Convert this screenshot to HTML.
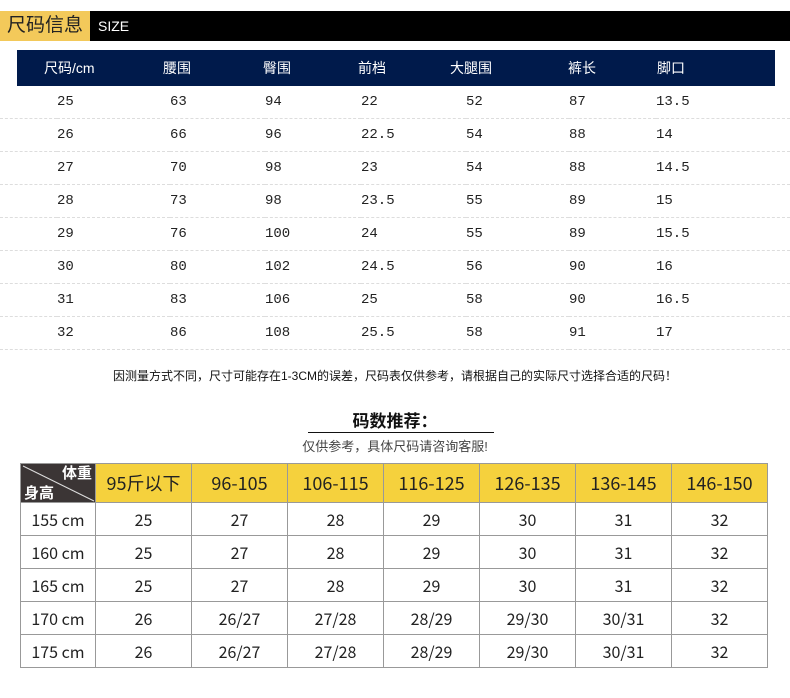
<!DOCTYPE html>
<html><head><meta charset="utf-8"><style>
body{margin:0;width:790px;height:698px;background:#fff;position:relative;font-family:"Liberation Sans","Noto Sans CJK SC",sans-serif;overflow:hidden}
.a{position:absolute}
.t1 td{height:32px;font-size:14px;font-family:"Liberation Mono","Noto Sans CJK SC",monospace;color:#222;border-bottom:1px dashed #ddd;padding:0}
table{border-collapse:collapse}
.t2 td{border:1px solid #999;text-align:center;font-size:16px;color:#222;padding:0;height:32px;font-family:"Noto Sans CJK SC",sans-serif}
.t2 tr.h td{background:#f5d13d;font-size:18px;height:38px}
</style></head><body>
<div class="a" style="left:0;top:11px;width:90px;height:30px;background:#f3c95a;font-size:19px;line-height:30px;text-align:center;color:#222">尺码信息</div>
<div class="a" style="left:90px;top:11px;width:700px;height:30px;background:#000;color:#fff;font-size:14px;line-height:30px;padding-left:8px;box-sizing:border-box">SIZE</div>
<div class="a" style="left:17px;top:50px;width:758px;height:36px;background:#001a4b"></div>
<div class="a" style="top:50px;left:0;width:790px;height:36px;color:#fff;font-size:14px;line-height:36px">
<span class="a" style="left:44px">尺码/cm</span><span class="a" style="left:163px">腰围</span><span class="a" style="left:263px">臀围</span><span class="a" style="left:358px">前档</span><span class="a" style="left:450px">大腿围</span><span class="a" style="left:568px">裤长</span><span class="a" style="left:657px">脚口</span></div>
<table class="t1 a" style="left:0;top:86px;width:790px">
<colgroup><col style="width:57px"><col style="width:113px"><col style="width:95px"><col style="width:96px"><col style="width:105px"><col style="width:103px"><col style="width:87px"><col></colgroup>
<tr><td></td><td>25</td><td>63</td><td>94</td><td>22</td><td>52</td><td>87</td><td>13.5</td></tr>
<tr><td></td><td>26</td><td>66</td><td>96</td><td>22.5</td><td>54</td><td>88</td><td>14</td></tr>
<tr><td></td><td>27</td><td>70</td><td>98</td><td>23</td><td>54</td><td>88</td><td>14.5</td></tr>
<tr><td></td><td>28</td><td>73</td><td>98</td><td>23.5</td><td>55</td><td>89</td><td>15</td></tr>
<tr><td></td><td>29</td><td>76</td><td>100</td><td>24</td><td>55</td><td>89</td><td>15.5</td></tr>
<tr><td></td><td>30</td><td>80</td><td>102</td><td>24.5</td><td>56</td><td>90</td><td>16</td></tr>
<tr><td></td><td>31</td><td>83</td><td>106</td><td>25</td><td>58</td><td>90</td><td>16.5</td></tr>
<tr><td></td><td>32</td><td>86</td><td>108</td><td>25.5</td><td>58</td><td>91</td><td>17</td></tr>
</table>
<div class="a" style="left:0;width:790px;top:367px;text-align:center;font-size:12px;color:#111">因测量方式不同，尺寸可能存在1-3CM的误差，尺码表仅供参考，请根据自己的实际尺寸选择合适的尺码！</div>
<div class="a" style="left:0;width:790px;top:407px;text-align:center;font-size:17px;font-weight:bold;color:#111">码数推荐：</div>
<div class="a" style="left:308px;top:432px;width:186px;height:1px;background:#111"></div>
<div class="a" style="left:0;width:790px;top:436px;text-align:center;font-size:13px;color:#444">仅供参考，具体尺码请咨询客服!</div>
<table class="t2 a" style="left:20px;top:463px;width:748px">
<colgroup><col style="width:75px"><col style="width:96px"><col style="width:96px"><col style="width:96px"><col style="width:96px"><col style="width:96px"><col style="width:96px"><col></colgroup>
<tr class="h"><td style="background:#3b3535;position:relative;color:#fff;font-size:15px;font-weight:bold">
<svg class="a" style="left:0;top:0" width="75" height="38"><line x1="2" y1="2" x2="73" y2="37" stroke="#ddd" stroke-width="1"/></svg>
<span class="a" style="right:3px;top:0px;line-height:18px">体重</span><span class="a" style="left:3px;bottom:0px;line-height:18px">身高</span></td>
<td>95斤以下</td><td>96-105</td><td>106-115</td><td>116-125</td><td>126-135</td><td>136-145</td><td>146-150</td></tr>
<tr><td>155 cm</td><td>25</td><td>27</td><td>28</td><td>29</td><td>30</td><td>31</td><td>32</td></tr>
<tr><td>160 cm</td><td>25</td><td>27</td><td>28</td><td>29</td><td>30</td><td>31</td><td>32</td></tr>
<tr><td>165 cm</td><td>25</td><td>27</td><td>28</td><td>29</td><td>30</td><td>31</td><td>32</td></tr>
<tr><td>170 cm</td><td>26</td><td>26/27</td><td>27/28</td><td>28/29</td><td>29/30</td><td>30/31</td><td>32</td></tr>
<tr><td>175 cm</td><td>26</td><td>26/27</td><td>27/28</td><td>28/29</td><td>29/30</td><td>30/31</td><td>32</td></tr>
</table>
</body></html>
